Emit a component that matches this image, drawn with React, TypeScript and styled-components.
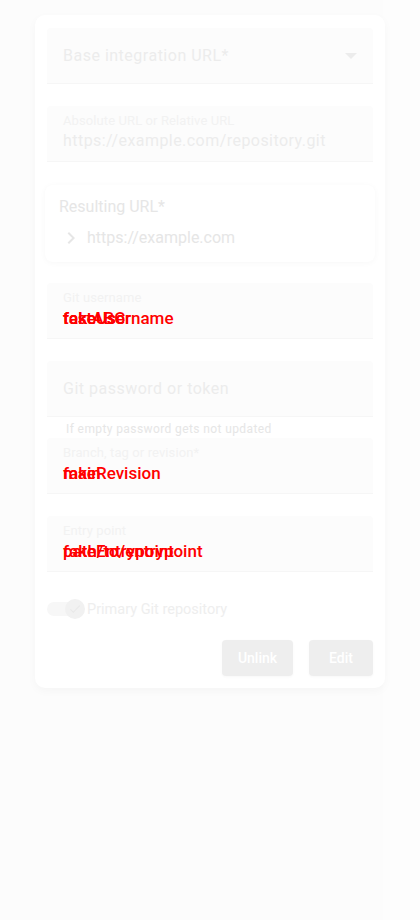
import React from "react";
import styled, { createGlobalStyle } from "styled-components";

const Global = createGlobalStyle`
  html, body { margin: 0; padding: 0; background: #fdfdfd; }
  body { font-family: Roboto, "Noto Sans", sans-serif; }
`;

const Page = styled.div`
  width: 420px;
  min-height: 920px;
  display: flex;
  box-sizing: border-box;
`;

const Column = styled.div`
  width: 383px;
  min-height: 920px;
  background: #fcfcfc;
  padding: 15px 0 0 35px;
  box-sizing: border-box;
`;

const Card = styled.div`
  width: 350px;
  box-sizing: border-box;
  background: #ffffff;
  border-radius: 10px;
  box-shadow: 0 3px 10px rgba(0, 0, 0, 0.03);
  padding: 13px 12px 12px 12px;
  display: flex;
  flex-direction: column;
`;

const FieldBox = styled.div<{ $mt?: number; $center?: boolean }>`
  margin-top: ${(p) => p.$mt ?? 0}px;
  height: 56px;
  box-sizing: border-box;
  background: #fcfcfc;
  border-bottom: 1px solid #f6f6f6;
  border-radius: 4px 4px 0 0;
  padding: ${(p) => (p.$center ? "0 16px" : "7px 16px 0 16px")};
  display: flex;
  flex-direction: column;
  justify-content: ${(p) => (p.$center ? "center" : "flex-start")};
`;

const SelectRow = styled.div`
  display: flex;
  align-items: center;
  justify-content: space-between;
`;

const BigLabel = styled.div`
  font-size: 16px;
  color: #ececec;
  letter-spacing: 0.5px;
  line-height: 20px;
`;

const SmallLabel = styled.div`
  font-size: 13px;
  color: #f2f2f2;
  line-height: 15px;
  letter-spacing: 0.1px;
`;

const Value = styled.div`
  font-size: 16px;
  color: #ececec;
  line-height: 20px;
  margin-top: 3px;
  letter-spacing: 0.45px;
`;

const Overlap = styled.div`
  display: grid;
  margin-top: 4px;
  line-height: 18px;
  & > span {
    grid-area: 1 / 1;
    color: #ff0000;
    font-size: 17px;
    font-weight: 500;
    font-family: Roboto, sans-serif;
    white-space: nowrap;
  }
`;

const ResultCard = styled.div`
  margin: 23px -2px 0 -2px;
  border-radius: 8px;
  background: #ffffff;
  box-shadow: 0 1px 6px rgba(0, 0, 0, 0.035);
  padding: 12px 14px 12px 14px;
  display: flex;
  flex-direction: column;
  gap: 9px;
`;

const ResultTitle = styled.div`
  font-size: 16px;
  color: #e6e6e6;
  line-height: 20px;
`;

const ResultRow = styled.div`
  display: flex;
  align-items: center;
  gap: 4px;
  font-size: 16px;
  color: #e6e6e6;
  line-height: 24px;
`;

const Helper = styled.div`
  font-size: 12px;
  color: #e6e6e6;
  padding: 5px 0 0 19px;
  line-height: 14px;
  letter-spacing: 0.4px;
`;

const SwitchRow = styled.div`
  display: flex;
  align-items: center;
  margin-top: 25px;
  height: 24px;
`;

const Track = styled.div`
  width: 34px;
  height: 14px;
  border-radius: 7px;
  background: #f7f7f7;
  display: flex;
  align-items: center;
  justify-content: flex-end;
`;

const Thumb = styled.div`
  width: 20px;
  height: 20px;
  border-radius: 50%;
  background: #f1f1f1;
  margin-right: -4px;
  display: flex;
  align-items: center;
  justify-content: center;
`;

const SwitchLabel = styled.div`
  font-size: 14.5px;
  color: #eeeeee;
  margin-left: 6px;
`;

const Actions = styled.div`
  display: flex;
  justify-content: flex-end;
  gap: 16px;
  margin-top: 19px;
`;

const Button = styled.button<{ $w: number }>`
  width: ${(p) => p.$w}px;
  height: 36px;
  border: 0;
  border-radius: 4px;
  background: #eeeeee;
  color: #ffffff;
  font-family: Roboto, sans-serif;
  font-size: 14px;
  font-weight: 500;
  box-shadow: 0 1px 3px rgba(0, 0, 0, 0.03);
  padding: 0;
`;

const Chevron = () => (
  <svg width="24" height="24" viewBox="0 0 24 24">
    <path d="M8.6 16.6 13.2 12 8.6 7.4 10 6l6 6-6 6z" fill="#e6e6e6" />
  </svg>
);

const Arrow = () => (
  <svg width="12" height="8" viewBox="0 0 10 5">
    <path d="M0 0l5 5 5-5z" fill="#ececec" />
  </svg>
);

const Check = () => (
  <svg width="14" height="14" viewBox="0 0 24 24">
    <path d="M9 16.2 4.8 12l-1.4 1.4L9 19 21 7l-1.4-1.4z" fill="#e8e8e8" />
  </svg>
);

export default function App() {
  return (
    <Page>
      <Global />
      <Column>
        <Card>
          <FieldBox $center>
            <SelectRow>
              <BigLabel>Base integration URL*</BigLabel>
              <Arrow />
            </SelectRow>
          </FieldBox>
          <FieldBox $mt={22}>
            <SmallLabel>Absolute URL or Relative URL</SmallLabel>
            <Value>https://example.com/repository.git</Value>
          </FieldBox>
          <ResultCard>
            <ResultTitle>Resulting URL*</ResultTitle>
            <ResultRow>
              <Chevron />
              <span>https://example.com</span>
            </ResultRow>
          </ResultCard>
          <FieldBox $mt={21}>
            <SmallLabel>Git username</SmallLabel>
            <Overlap>
              <span>fakeUsername</span>
              <span>testABC</span>
              <span>fakeUser</span>
            </Overlap>
          </FieldBox>
          <FieldBox $mt={22} $center>
            <BigLabel>Git password or token</BigLabel>
          </FieldBox>
          <Helper>If empty password gets not updated</Helper>
          <FieldBox $mt={2}>
            <SmallLabel>Branch, tag or revision*</SmallLabel>
            <Overlap>
              <span>fakeRevision</span>
              <span>main</span>
            </Overlap>
          </FieldBox>
          <FieldBox $mt={22}>
            <SmallLabel>Entry point</SmallLabel>
            <Overlap>
              <span>fakeEntrypoint</span>
              <span>path/to/entrypoint</span>
            </Overlap>
          </FieldBox>
          <SwitchRow>
            <Track>
              <Thumb>
                <Check />
              </Thumb>
            </Track>
            <SwitchLabel>Primary Git repository</SwitchLabel>
          </SwitchRow>
          <Actions>
            <Button $w={71}>Unlink</Button>
            <Button $w={64}>Edit</Button>
          </Actions>
        </Card>
      </Column>
    </Page>
  );
}
